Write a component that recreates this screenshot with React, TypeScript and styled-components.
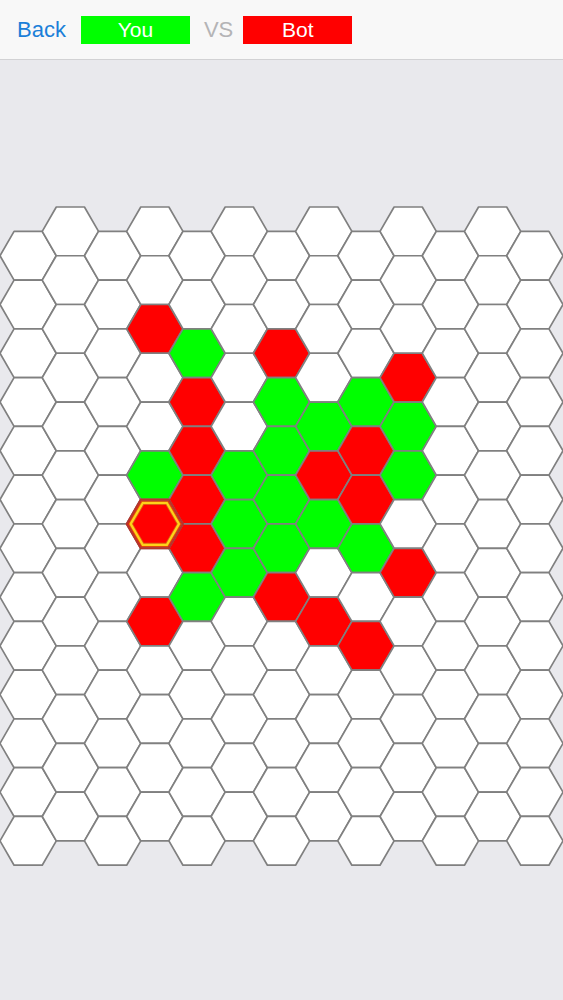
import React from "react";
import styled, { createGlobalStyle } from "styled-components";

const GlobalStyle = createGlobalStyle`
  html, body {
    margin: 0;
    padding: 0;
    background: #e9e9ed;
  }
  body {
    font-family: "Liberation Sans", Arial, sans-serif;
  }
`;

const Page = styled.div`
  width: 563px;
  min-height: 1000px;
  background: #e9e9ed;
  display: flex;
  flex-direction: column;
`;

const Header = styled.header`
  height: 59px;
  background: #f8f8f8;
  border-bottom: 1px solid #d2d2d4;
  display: flex;
  align-items: center;
  padding-left: 17px;
  box-sizing: content-box;
`;

const BackButton = styled.button`
  background: none;
  border: none;
  padding: 0;
  margin: 0 15px 0 0;
  font-family: "Liberation Sans", Arial, sans-serif;
  font-size: 22px;
  color: #1b7fd8;
  cursor: pointer;
`;

const PlayerTag = styled.div<{ $color: string }>`
  width: 109px;
  height: 28px;
  background: ${(p) => p.$color};
  color: #ffffff;
  font-size: 21px;
  display: flex;
  align-items: center;
  justify-content: center;
`;

const Versus = styled.span`
  font-size: 22px;
  color: #b4b4b6;
  margin: 0 10px 0 14px;
`;

const Main = styled.main`
  padding-top: 140px;
  display: flex;
  justify-content: center;
`;

const Board = styled.svg`
  display: block;
  width: 563px;
  height: 680px;
`;

type Cell = "e" | "r" | "g";

const S = 28.15;
const H = (S * Math.sqrt(3)) / 2;
const COLS = 13;
const ROWS = 13;
const Y_OFF = 7;

const red: [number, number][] = [
  [3, 2], [6, 2], [9, 3], [4, 3], [4, 4], [8, 4], [7, 5], [4, 5],
  [8, 5], [3, 6], [4, 6], [9, 7], [6, 7], [3, 8], [7, 8], [8, 8],
];
const green: [number, number][] = [
  [4, 2], [6, 3], [7, 4], [8, 3], [9, 4], [6, 4], [3, 5], [5, 5],
  [9, 5], [6, 5], [5, 6], [7, 6], [6, 6], [8, 6], [5, 7], [4, 7],
];
const selected: [number, number] = [3, 6];

function cellAt(c: number, r: number): Cell {
  if (red.some(([a, b]) => a === c && b === r)) return "r";
  if (green.some(([a, b]) => a === c && b === r)) return "g";
  return "e";
}

function center(c: number, r: number) {
  const x = S + 1.5 * S * c;
  const y = Y_OFF + H + (c % 2 === 0 ? H : 0) + 2 * H * r;
  return { x, y };
}

function hexPoints(cx: number, cy: number, s: number) {
  const h = (s * Math.sqrt(3)) / 2;
  return [
    [cx - s, cy],
    [cx - s / 2, cy - h],
    [cx + s / 2, cy - h],
    [cx + s, cy],
    [cx + s / 2, cy + h],
    [cx - s / 2, cy + h],
  ]
    .map(([x, y]) => `${x.toFixed(2)},${y.toFixed(2)}`)
    .join(" ");
}

const fills: Record<Cell, string> = { e: "#ffffff", r: "#ff0000", g: "#00ff00" };

export default function App() {
  const cells: React.ReactNode[] = [];
  for (let c = 0; c < COLS; c++) {
    for (let r = 0; r < ROWS; r++) {
      const { x, y } = center(c, r);
      const kind = cellAt(c, r);
      cells.push(
        <polygon
          key={`${c}-${r}`}
          points={hexPoints(x, y, S)}
          fill={fills[kind]}
          stroke="#808080"
          strokeWidth={1.7}
          strokeLinejoin="round"
        />
      );
    }
  }
  const sel = center(selected[0], selected[1]);

  return (
    <>
      <GlobalStyle />
      <Page>
        <Header>
          <BackButton>Back</BackButton>
          <PlayerTag $color="#00ff00">You</PlayerTag>
          <Versus>VS</Versus>
          <PlayerTag $color="#ff0000">Bot</PlayerTag>
        </Header>
        <Main>
          <Board viewBox="0 0 563 680">
            {cells}
            <polygon
              points={hexPoints(sel.x, sel.y, S)}
              fill="none"
              stroke="#b8332a"
              strokeWidth={2}
              strokeLinejoin="round"
            />
            <polygon
              points={hexPoints(sel.x, sel.y, S - 4)}
              fill="none"
              stroke="#d9620f"
              strokeWidth={4}
              strokeLinejoin="miter"
            />
            <polygon
              points={hexPoints(sel.x, sel.y, S - 4)}
              fill="none"
              stroke="#ffd21a"
              strokeWidth={2.2}
              strokeLinejoin="miter"
            />
          </Board>
        </Main>
      </Page>
    </>
  );
}
